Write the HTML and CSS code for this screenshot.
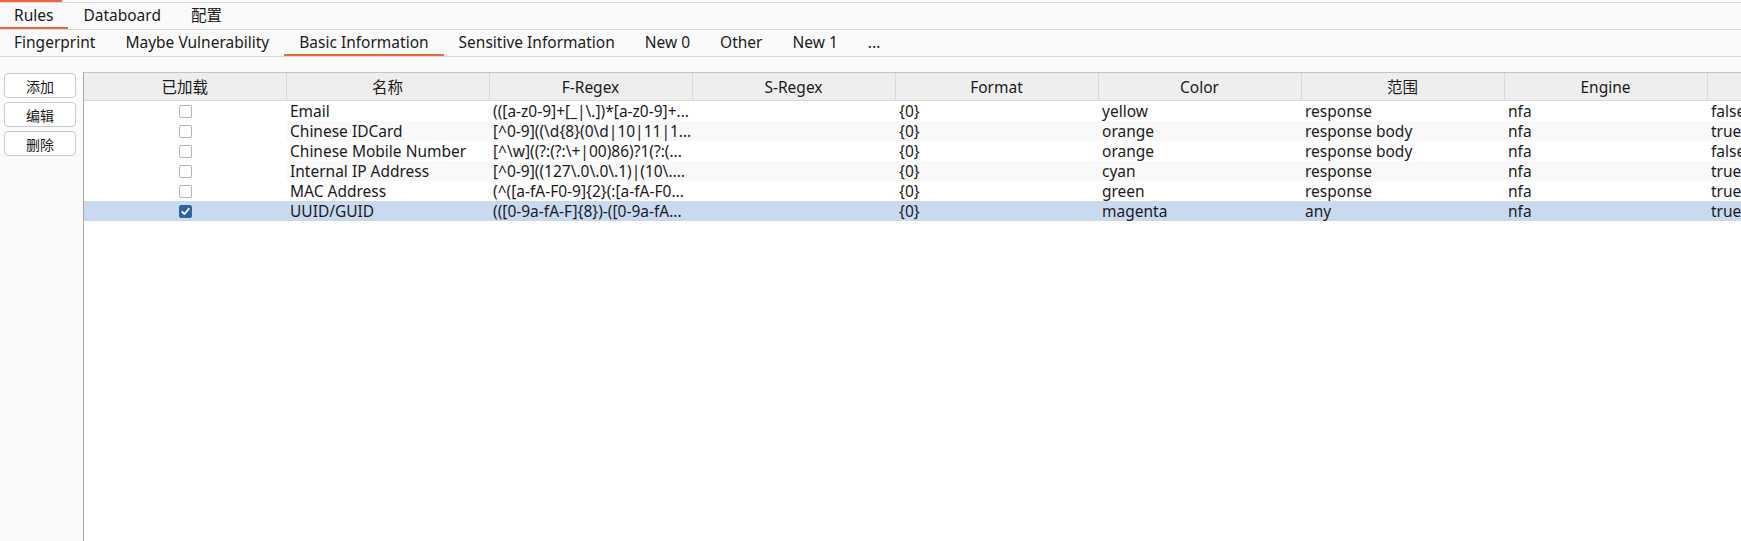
FILE: index.html
```html
<!DOCTYPE html>
<html>
<head>
<meta charset="utf-8">
<link rel="stylesheet" href="styles.css">
</head>
<body>
<div class="topline"><span class="topline-mark"></span></div>
<div class="tabbar">
  <div class="tab active">Rules</div>
  <div class="tab">Databoard</div>
  <div class="tab">配置</div>
</div>
<div class="tabbar">
  <div class="tab">Fingerprint</div>
  <div class="tab">Maybe Vulnerability</div>
  <div class="tab active">Basic Information</div>
  <div class="tab">Sensitive Information</div>
  <div class="tab">New 0</div>
  <div class="tab">Other</div>
  <div class="tab">New 1</div>
  <div class="tab">...</div>
</div>
<div class="main">
  <div class="side">
    <button class="btn">添加</button>
    <button class="btn">编辑</button>
    <button class="btn">删除</button>
  </div>
  <div class="tablewrap">
    <table class="grid">
      <colgroup>
        <col class="c0"><col class="c"><col class="c"><col class="c"><col class="c"><col class="c"><col class="c"><col class="c"><col class="c">
      </colgroup>
      <thead>
        <tr><th>已加载</th><th>名称</th><th>F-Regex</th><th>S-Regex</th><th>Format</th><th>Color</th><th>范围</th><th>Engine</th><th></th></tr>
      </thead>
      <tbody>
        <tr><td class="cb"><span class="box"></span></td><td>Email</td><td>(([a-z0-9]+[_|\.])*[a-z0-9]+...</td><td></td><td>{0}</td><td>yellow</td><td>response</td><td>nfa</td><td>false</td></tr>
        <tr class="alt"><td class="cb"><span class="box"></span></td><td>Chinese IDCard</td><td>[^0-9]((\d{8}(0\d|10|11|1...</td><td></td><td>{0}</td><td>orange</td><td>response body</td><td>nfa</td><td>true</td></tr>
        <tr><td class="cb"><span class="box"></span></td><td>Chinese Mobile Number</td><td>[^\w]((?:(?:\+|00)86)?1(?:(...</td><td></td><td>{0}</td><td>orange</td><td>response body</td><td>nfa</td><td>false</td></tr>
        <tr class="alt"><td class="cb"><span class="box"></span></td><td>Internal IP Address</td><td>[^0-9]((127\.0\.0\.1)|(10\....</td><td></td><td>{0}</td><td>cyan</td><td>response</td><td>nfa</td><td>true</td></tr>
        <tr><td class="cb"><span class="box"></span></td><td>MAC Address</td><td>(^([a-fA-F0-9]{2}(:[a-fA-F0...</td><td></td><td>{0}</td><td>green</td><td>response</td><td>nfa</td><td>true</td></tr>
        <tr class="sel"><td class="cb"><span class="box checked"><svg viewBox="0 0 13 13" width="13" height="13"><path d="M3.2 6.8 L5.5 9 L9.8 3.8" fill="none" stroke="#fff" stroke-width="1.8" stroke-linecap="round" stroke-linejoin="round"/></svg></span></td><td>UUID/GUID</td><td>(([0-9a-fA-F]{8})-([0-9a-fA...</td><td></td><td>{0}</td><td>magenta</td><td>any</td><td>nfa</td><td>true</td></tr>
      </tbody>
    </table>
  </div>
</div>
</body>
</html>
```

FILE: styles.css
```css
html, body {
  margin: 0;
  padding: 0;
  height: 100%;
}
body {
  background: #fafafa;
  font-family: "Noto Sans", "Noto Sans CJK SC", sans-serif;
  font-size: 15.5px;
  color: #1b1b1b;
  overflow: hidden;
  display: flex;
  flex-direction: column;
}
.topline {
  height: 2px;
  border-bottom: 1px solid #d8d8d8;
  display: flex;
}
.topline-mark {
  width: 62px;
  height: 2px;
  background: #f0643a;
}
.tabbar {
  display: flex;
  height: 26px;
  border-bottom: 1px solid #d8d8d8;
}
.tab {
  padding: 0 15px;
  line-height: 25px;
  height: 26px;
  box-sizing: border-box;
  white-space: nowrap;
}
.tabbar .tab:first-child {
  padding-left: 14px;
}
.tab.active {
  border-bottom: 2px solid #f0643a;
}
.main {
  flex: 1;
  display: flex;
  padding-top: 15px;
  min-height: 0;
}
.side {
  width: 83px;
  flex: none;
  display: flex;
  flex-direction: column;
  align-items: flex-start;
  gap: 4px;
  padding-left: 4px;
  padding-top: 1px;
  box-sizing: border-box;
}
.btn {
  width: 72px;
  height: 25px;
  background: #ffffff;
  border: 1px solid #c9c9c9;
  border-radius: 4px;
  font-family: "Noto Sans CJK SC", sans-serif;
  font-size: 14px;
  color: #1b1b1b;
  padding: 0;
}
.tablewrap {
  flex: 1;
  background: #ffffff;
  border-left: 1px solid #a8a8a8;
  border-top: 1px solid #c4c4c4;
  overflow: hidden;
  min-width: 0;
}
.grid {
  border-collapse: collapse;
  table-layout: fixed;
  width: 1826px;
}
.c0 { width: 202px; }
.c { width: 203px; }
.grid th {
  height: 27px;
  padding: 0;
  background: #eeeeee;
  border-right: 1px solid #d9d9d9;
  border-bottom: 1px solid #d9d9d9;
  font-weight: normal;
  text-align: center;
  white-space: nowrap;
}
.grid td {
  height: 20px;
  padding: 0 0 0 4px;
  white-space: nowrap;
  overflow: hidden;
  line-height: 20px;
}
.grid tr.alt td {
  background: #f9f9f9;
}
.grid tr.alt td.cb {
  background: #ffffff;
}
.grid tr.sel td,
.grid tr.sel td.cb {
  background: #c9daf0;
}
.grid td.cb {
  text-align: center;
  padding: 0;
}
.box {
  display: inline-block;
  width: 13px;
  height: 13px;
  box-sizing: border-box;
  border: 1px solid #b4b4b4;
  border-radius: 2px;
  background: #ffffff;
  vertical-align: middle;
  position: relative;
  top: -1px;
}
.box.checked {
  background: #2e64a0;
  border-color: #2e64a0;
}
.box.checked svg {
  display: block;
  margin: -1px;
}
```
